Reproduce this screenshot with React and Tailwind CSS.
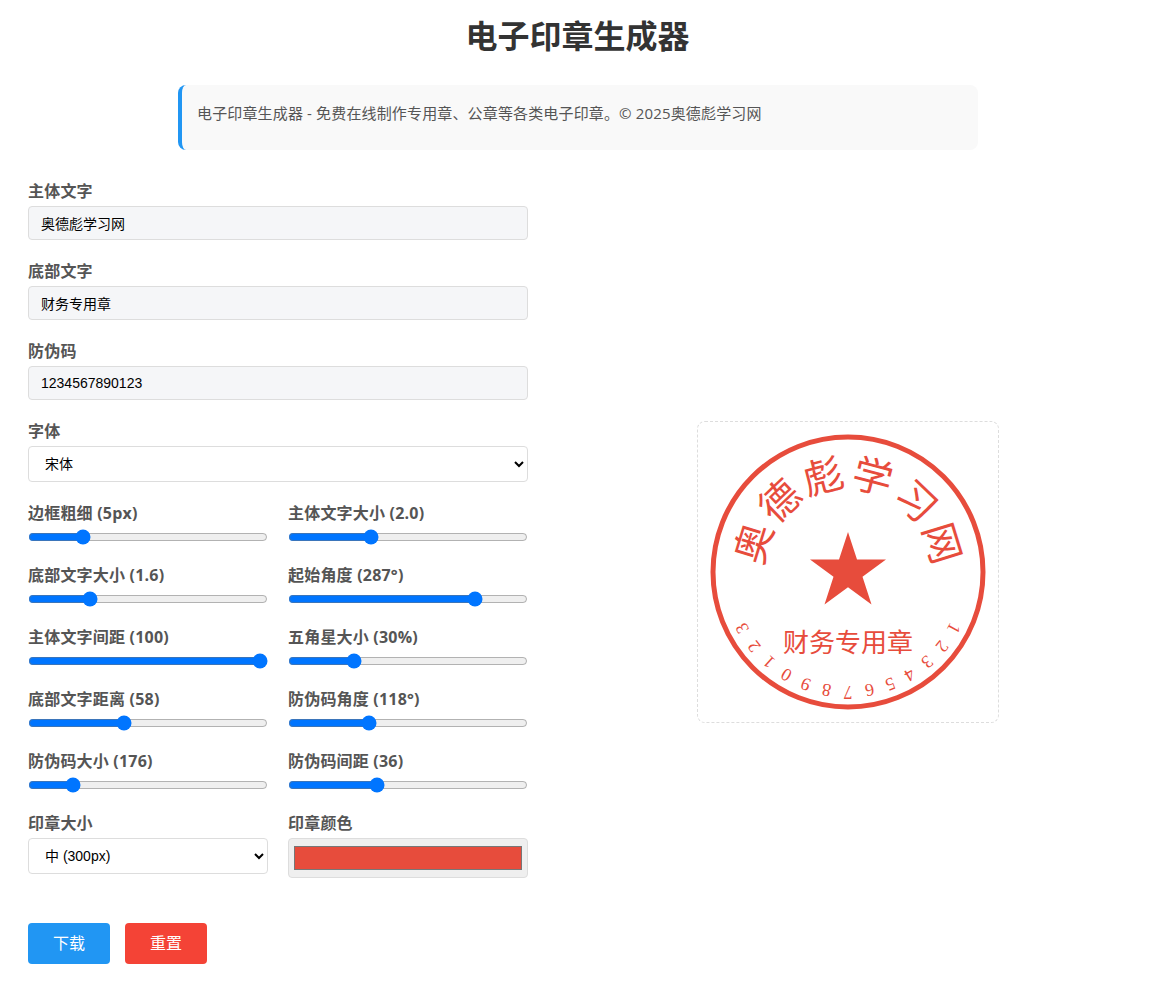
const sliders = [
  ["边框粗细 (5px)", 21],
  ["主体文字大小 (2.0)", 33.5],
  ["底部文字大小 (1.6)", 24.1],
  ["起始角度 (287°)", 79.7],
  ["主体文字间距 (100)", 100],
  ["五角星大小 (30%)", 25.9],
  ["底部文字距离 (58)", 39.3],
  ["防伪码角度 (118°)", 32.8],
  ["防伪码大小 (176)", 16.5],
  ["防伪码间距 (36)", 36.2],
]

const labelCls = "block h-6 leading-6 text-base font-bold tracking-[0.2px] text-[#555] font-['Open_Sans','Noto_Sans_CJK_SC',sans-serif]"
const controlFont = "font-['Liberation_Sans','Noto_Sans_CJK_SC',sans-serif]"

function TextField({label, value}) {
  return (
    <div className="mb-[19px]">
      <label className={labelCls}>{label}</label>
      <input
        type="text"
        defaultValue={value}
        className={`mt-[3px] block w-full h-[34px] px-3 text-sm text-black bg-[#f5f6f8] border border-[#ddd] rounded ${controlFont}`}
      />
    </div>
  )
}

function Stamp() {
  const color = "#e74c3c"
  const main = "奥德彪学习网".split("")
  const digits = "1234567890123".split("")
  return (
    <svg width="300" height="300" viewBox="0 0 300 300">
      <circle cx="150" cy="150" r="135" fill="none" stroke={color} strokeWidth="5" />
      <polygon
        fill={color}
        points="150,110 159,137.6 188,137.6 164.5,154.7 173.5,182.4 150,165.3 126.5,182.4 135.5,154.7 112,137.6 141,137.6"
      />
      {main.map((c, i) => (
        <text
          key={i}
          x="150"
          y={150 - 101}
          fill={color}
          fontSize="40"
          textAnchor="middle"
          dominantBaseline="central"
          transform={`rotate(${-73 + i * 29.2} 150 150)`}
          className="font-['Noto_Sans_CJK_SC',sans-serif]"
        >
          {c}
        </text>
      ))}
      <text
        x="150"
        y="218"
        fill={color}
        fontSize="26"
        textAnchor="middle"
        dominantBaseline="central"
        className="font-['Noto_Sans_CJK_SC',sans-serif]"
      >
        财务专用章
      </text>
      {digits.map((c, i) => (
        <text
          key={i}
          x="150"
          y={150 - 120}
          fill={color}
          fontSize="18"
          textAnchor="middle"
          dominantBaseline="central"
          transform={`rotate(${118 + i * 10.33} 150 150)`}
          className="font-['Liberation_Serif',serif]"
        >
          {c}
        </text>
      ))}
    </svg>
  )
}

export default function App() {
  return (
    <div className="min-h-[982px] bg-white px-7 pt-[13px] pb-[18px]">
      <h1 className="text-[32px] leading-[42px] font-bold text-center text-[#333] pr-[2px] mb-[30px] font-['Noto_Sans_CJK_SC',sans-serif]">
        电子印章生成器
      </h1>
      <div className="ml-[150px] w-[800px] border-l-4 border-[#2196f3] bg-[#f9f9f9] rounded-lg pl-[15px] pt-[14px] pb-[23px] mb-[29px]">
        <p className="text-[15px] leading-7 tracking-[0.15px] text-[#555] font-['Open_Sans','Noto_Sans_CJK_SC',sans-serif]">
          电子印章生成器 - 免费在线制作专用章、公章等各类电子印章。© 2025奥德彪学习网
        </p>
      </div>

      <div className="flex items-center gap-10">
        <div className="w-[500px] shrink-0">
          <TextField label="主体文字" value="奥德彪学习网" />
          <TextField label="底部文字" value="财务专用章" />
          <TextField label="防伪码" value="1234567890123" />
          <div className="mb-[19px]">
            <label className={labelCls}>字体</label>
            <select className={`mt-[3px] block w-full h-9 px-3 text-sm text-black bg-white border border-[#ddd] rounded ${controlFont}`}>
              <option>宋体</option>
            </select>
          </div>

          <div className="grid grid-cols-2 gap-x-5">
            {sliders.map(([label, value]) => (
              <div key={label} className="mb-[18px]">
                <label className={labelCls}>{label}</label>
                <input
                  type="range"
                  min="0"
                  max="100"
                  step="0.1"
                  defaultValue={value}
                  className="mt-1 block w-full h-4"
                />
              </div>
            ))}
            <div>
              <label className={labelCls}>印章大小</label>
              <select className={`mt-[3px] block w-full h-9 px-3 text-sm text-black bg-white border border-[#ddd] rounded ${controlFont}`}>
                <option>中 (300px)</option>
              </select>
            </div>
            <div>
              <label className={labelCls}>印章颜色</label>
              <input
                type="color"
                defaultValue="#e74c3c"
                className="mt-[3px] block w-full h-10 p-[3px] bg-[#efefef] border border-[#ddd] rounded"
              />
            </div>
          </div>

          <div className="flex gap-[15px] mt-[45px]">
            <button className={`w-[82px] h-[41px] rounded text-base text-white bg-[#2196f3] ${controlFont}`}>下载</button>
            <button className={`w-[82px] h-[41px] rounded text-base text-white bg-[#f44336] ${controlFont}`}>重置</button>
          </div>
        </div>

        <div className="flex-1 flex justify-center pr-px">
          <div className="border border-dashed border-[#ddd] rounded-lg">
            <Stamp />
          </div>
        </div>
      </div>
    </div>
  )
}
